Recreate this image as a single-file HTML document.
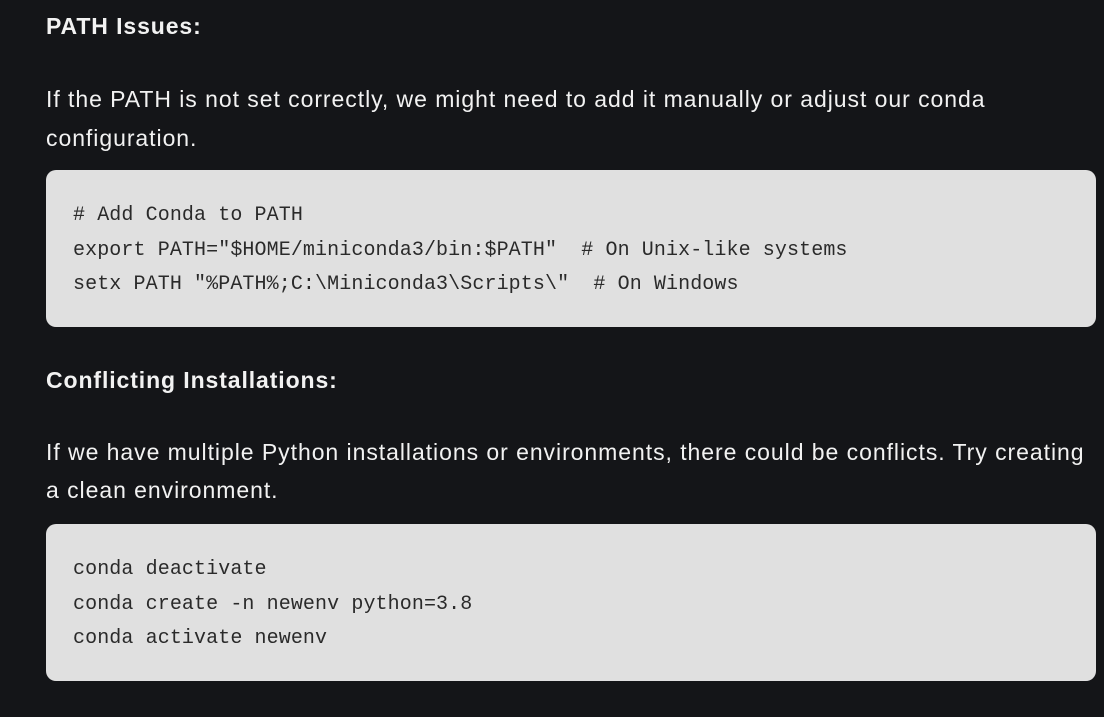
<!DOCTYPE html>
<html><head><meta charset="utf-8"><style>
html,body{margin:0;padding:0;background:#141518;width:1104px;height:717px;overflow:hidden}
.t{position:absolute;left:46px;color:#f2f2f2;font-family:"Liberation Sans",sans-serif;font-size:23px;letter-spacing:0.95px;white-space:nowrap;line-height:30px}
.b{font-weight:bold;letter-spacing:0.9px}
.code{position:absolute;left:46px;width:1050px;height:157px;background:#e0e0e0;border-radius:10px}
.c{position:absolute;left:27px;font-family:"Liberation Mono",monospace;font-size:20px;letter-spacing:0.1px;color:#2a2a2a;white-space:pre;line-height:30px}
</style></head><body>
<div class="t b" style="top:11px">PATH Issues:</div>
<div class="t" style="top:84px">If the PATH is not set correctly, we might need to add it manually or adjust our conda</div>
<div class="t" style="top:123px">configuration.</div>
<div class="code" style="top:170px">
<div class="c" style="top:31px"># Add Conda to PATH</div>
<div class="c" style="top:66px">export PATH="$HOME/miniconda3/bin:$PATH"  # On Unix-like systems</div>
<div class="c" style="top:100px">setx PATH "%PATH%;C:\Miniconda3\Scripts\"  # On Windows</div>
</div>
<div class="t b" style="top:365px">Conflicting Installations:</div>
<div class="t" style="top:437px">If we have multiple Python installations or environments, there could be conflicts. Try creating</div>
<div class="t" style="top:475px">a clean environment.</div>
<div class="code" style="top:524px">
<div class="c" style="top:31px">conda deactivate</div>
<div class="c" style="top:66px">conda create -n newenv python=3.8</div>
<div class="c" style="top:100px">conda activate newenv</div>
</div>
</body></html>
